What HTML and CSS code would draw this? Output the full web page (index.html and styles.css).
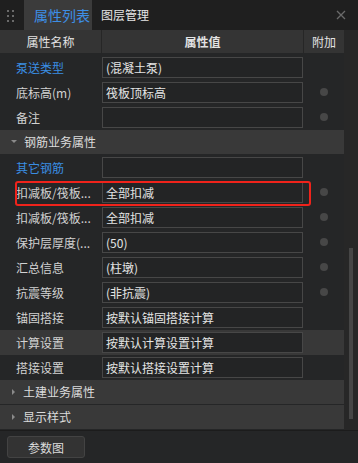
FILE: index.html
```html
<!DOCTYPE html>
<html lang="zh-CN">
<head>
    <meta charset="UTF-8">
    <title>属性列表</title>
    <link rel="stylesheet" href="styles.css">
</head>
<body>
    <div class="panel">
        <!-- 顶部标签 -->
        <div class="tabs">
            <div class="grip"><i></i><i></i><i></i><i></i><i></i><i></i></div>
            <div class="tab active">属性列表</div>
            <div class="tab">图层管理</div>
            <div class="close">
                <svg width="10" height="10" viewBox="0 0 10 10"><path d="M1 1L9 9M9 1L1 9" stroke="#6a6a6a" stroke-width="1.3"/></svg>
            </div>
        </div>

        <div class="main">
            <div class="table">
                <div class="head">
                    <div class="c-name">属性名称</div>
                    <div class="c-value">属性值</div>
                    <div class="c-extra">附加</div>
                </div>
                <div class="rows">
                    <div class="row"><div class="label blue">泵送类型</div><div class="value"><div class="input">(混凝土泵)</div></div><div class="extra"></div></div>
                    <div class="row"><div class="label">底标高(m)</div><div class="value"><div class="input">筏板顶标高</div></div><div class="extra"><span class="dot"></span></div></div>
                    <div class="row"><div class="label">备注</div><div class="value"><div class="input"></div></div><div class="extra"><span class="dot"></span></div></div>
                    <div class="group"><span class="arrow down"></span>钢筋业务属性</div>
                    <div class="row"><div class="label blue">其它钢筋</div><div class="value"><div class="input"></div></div><div class="extra"></div></div>
                    <div class="row marked"><div class="label">扣减板/筏板...</div><div class="value"><div class="input">全部扣减</div></div><div class="extra"><span class="dot"></span></div><div class="mark"></div></div>
                    <div class="row"><div class="label">扣减板/筏板...</div><div class="value"><div class="input">全部扣减</div></div><div class="extra"><span class="dot"></span></div></div>
                    <div class="row"><div class="label">保护层厚度(...</div><div class="value"><div class="input">(50)</div></div><div class="extra"><span class="dot"></span></div></div>
                    <div class="row"><div class="label">汇总信息</div><div class="value"><div class="input">(柱墩)</div></div><div class="extra"><span class="dot"></span></div></div>
                    <div class="row"><div class="label">抗震等级</div><div class="value"><div class="input">(非抗震)</div></div><div class="extra"><span class="dot"></span></div></div>
                    <div class="row"><div class="label">锚固搭接</div><div class="value"><div class="input">按默认锚固搭接计算</div></div><div class="extra"></div></div>
                    <div class="row hover"><div class="label">计算设置</div><div class="value"><div class="input">按默认计算设置计算</div></div><div class="extra"></div></div>
                    <div class="row"><div class="label">搭接设置</div><div class="value"><div class="input">按默认搭接设置计算</div></div><div class="extra"></div></div>
                    <div class="group"><span class="arrow right"></span>土建业务属性</div>
                    <div class="group"><span class="arrow right"></span>显示样式</div>
                </div>
            </div>
            <div class="gutter"><div class="thumb"></div></div>
        </div>

        <!-- 底部按钮 -->
        <div class="footer">
            <div class="btn">参数图</div>
        </div>
    </div>
</body>
</html>
```
FILE: styles.css
```css
/* 全局 */
body, html {
    margin: 0;
    padding: 0;
    background: #252627;
    font-family: 'Noto Sans CJK SC', 'Noto Sans', sans-serif;
    font-size: 12px;
    color: #d2d2d2;
}

.panel {
    width: 358px;
    height: 463px;
    display: flex;
    flex-direction: column;
    overflow: hidden;
}

/* 标签栏 */
.tabs {
    height: 30px;
    display: flex;
    align-items: stretch;
    background: #1f1f1f;
}

.grip {
    width: 8px;
    margin: 10px 9px 0 7px;
    height: 12px;
    display: grid;
    grid-template-columns: 2px 2px;
    column-gap: 3px;
    row-gap: 3px;
}

.grip i {
    width: 2px;
    height: 2px;
    background: #6a6a6a;
}

.tab {
    display: flex;
    align-items: center;
    padding: 0 9px;
    color: #e6e6e6;
    white-space: nowrap;
}

.tab.active {
    background: #3b3b3b;
    color: #3d8fe6;
    font-size: 14px;
    width: 58px;
    padding: 0 0 0 10px;
    overflow: hidden;
}

.close {
    margin-left: auto;
    width: 30px;
    display: flex;
    align-items: center;
    justify-content: center;
    padding-right: 2px;
}

/* 主体 */
.main {
    display: flex;
    height: 402px;
    border-bottom: 1px solid #1c1c1c;
}

.table {
    width: 344px;
    display: flex;
    flex-direction: column;
}

.head {
    height: 23px;
    display: flex;
    background: #343434;
    color: #e2e2e2;
}

.head > div {
    display: flex;
    align-items: center;
    justify-content: center;
}

.c-name { width: 101px; border-right: 1px solid #262626; }
.c-value { width: 201px; border-right: 1px solid #262626; font-weight: bold; }
.c-extra { flex: 1; }

.rows {
    padding-top: 2px;
    display: flex;
    flex-direction: column;
}

.row {
    height: 25px;
    display: flex;
    align-items: center;
    position: relative;
}

.row.hover {
    background: #383838;
}

.label {
    width: 86px;
    padding-left: 16px;
    white-space: nowrap;
}

.label.blue {
    color: #3a8ee3;
}

.value {
    width: 201px;
}

.input {
    height: 19px;
    line-height: 19px;
    border: 1px solid #474747;
    background: #232425;
    padding-left: 3px;
    color: #e4e4e4;
    white-space: nowrap;
    overflow: hidden;
}

.extra {
    flex: 1;
    display: flex;
    justify-content: center;
}

.dot {
    width: 8px;
    height: 8px;
    border-radius: 50%;
    background: #474747;
}

/* 红色标注框 */
.mark {
    position: absolute;
    left: 15px;
    top: 1px;
    width: 292px;
    height: 21px;
    border: 2px solid #f0231b;
    border-radius: 3px;
}

.group {
    height: 24px;
    margin-bottom: 1px;
    background: #393939;
    display: flex;
    align-items: center;
    color: #dcdcdc;
}

.arrow {
    width: 0;
    height: 0;
    margin: 0 7px 0 11px;
}

.arrow.down {
    border-left: 3px solid transparent;
    border-right: 3px solid transparent;
    border-top: 3px solid #8a8a8a;
}

.arrow.right {
    border-top: 3px solid transparent;
    border-bottom: 3px solid transparent;
    border-left: 3px solid #8a8a8a;
    margin-left: 12px;
    margin-right: 8px;
}

/* 滚动条 */
.gutter {
    flex: 1;
    background: #272727;
}

.thumb {
    width: 4px;
    height: 171px;
    margin: 218px 0 0 5px;
    background: #464646;
}

/* 底部 */
.footer {
    flex: 1;
    padding: 5px 7px;
}

.btn {
    width: 76px;
    height: 20px;
    border: 1px solid #434343;
    border-radius: 3px;
    background: #333333;
    color: #dcdcdc;
    display: flex;
    align-items: center;
    justify-content: center;
}
```
